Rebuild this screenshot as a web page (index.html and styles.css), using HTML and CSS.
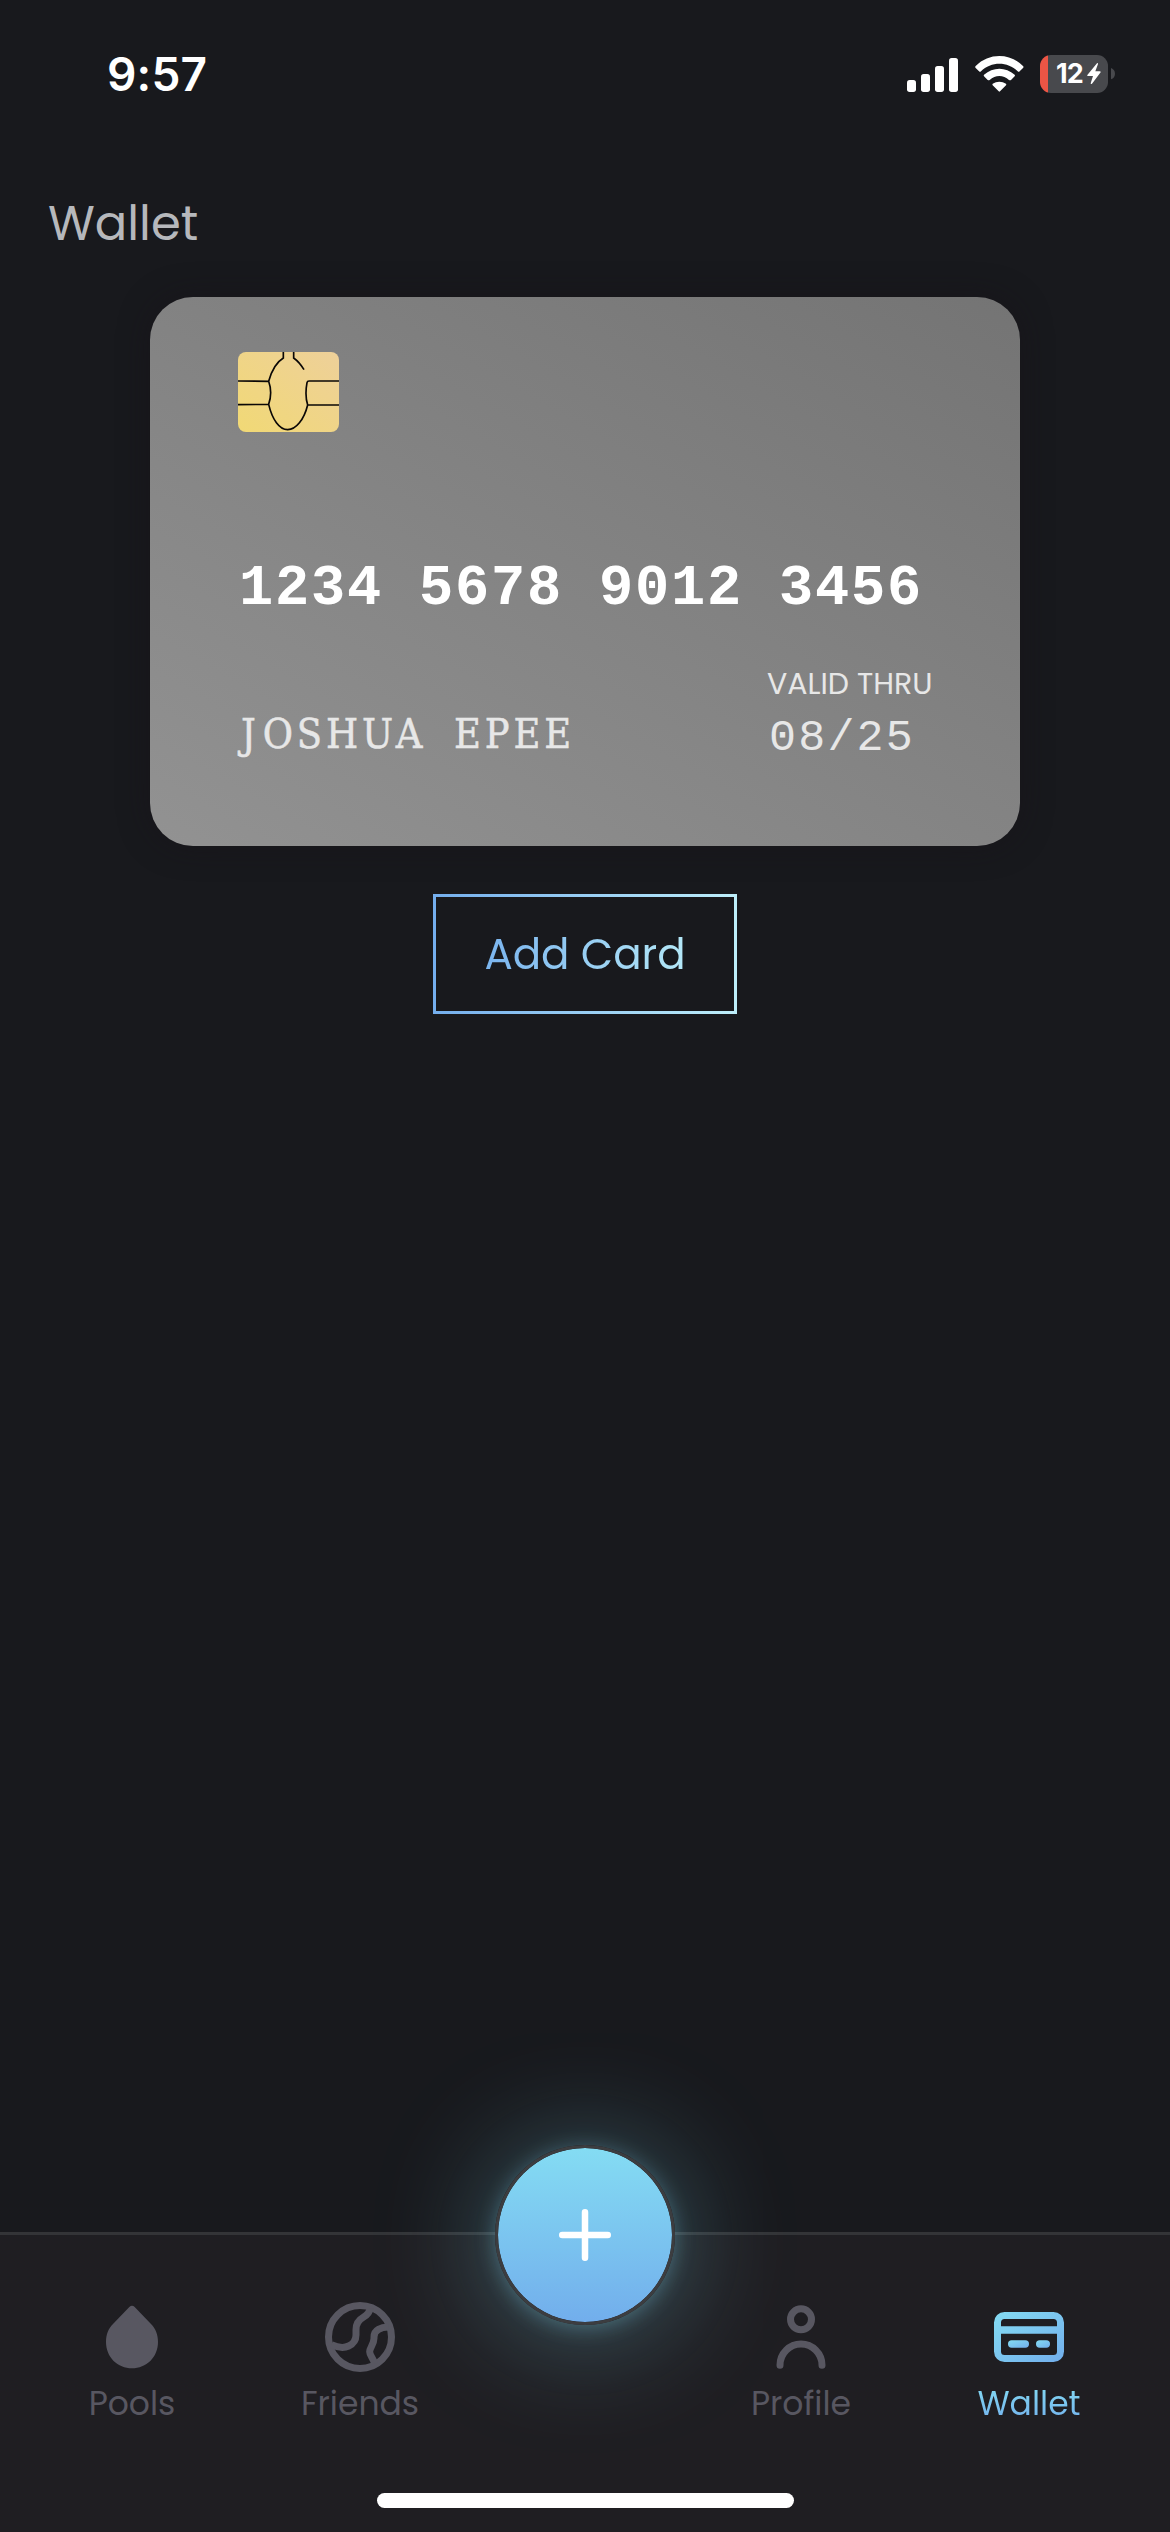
FILE: index.html
```html
<!DOCTYPE html>
<html lang="en">
<head>
<meta charset="utf-8">
<title>Wallet</title>
<link rel="stylesheet" href="styles.css">
</head>
<body>
<div class="screen">
  <header class="status">
    <span class="time">9:57</span>
    <div class="indicators">
      <svg class="signal" viewBox="0 0 153 108" fill="#fff">
        <rect x="0" y="72" width="27" height="36" rx="8"/>
        <rect x="42" y="54" width="27" height="54" rx="8"/>
        <rect x="84" y="30" width="27" height="78" rx="8"/>
        <rect x="126" y="6" width="27" height="102" rx="8"/>
      </svg>
      <svg class="wifi" viewBox="0 0 146 108" fill="#fff">
        <path d="M2 30C42-10 104-10 144 30Q147 33 144 36L134 46Q131 49 128 46C98 16 48 16 18 46Q15 49 12 46L2 36Q-1 33 2 30Z"/>
        <path d="M27 56C54 32 92 32 119 56Q121 59 119 61L108 72Q105 74 102 72C85 56 61 56 44 72Q41 74 38 72L27 61Q25 59 27 56Z"/>
        <path d="M53 83C65 75 81 75 93 83Q95 86 93 88L75 106Q73 108 71 106L53 88Q51 86 53 83Z"/>
      </svg>
      <div class="battery">
        <span class="level">12</span>
        <svg class="bolt" viewBox="0 0 42 64" fill="#fff"><path d="M30 1L1 36Q0 39 3 39H18L11 61Q11 65 15 62L41 28Q42 25 38 25H25L33 3Q33-1 30 1Z"/></svg>
      </div>
      <svg class="nub" viewBox="0 0 12 34"><path d="M0 0Q12 5 12 17T0 34Z" fill="#48494d"/></svg>
    </div>
  </header>

  <main class="content">
    <h1 class="title">Wallet</h1>
    <section class="card">
      <svg class="chip" viewBox="0 0 303 240">
        <defs><linearGradient id="gold" x1="0" y1="1" x2="1" y2="0"><stop offset="0" stop-color="#f1d975"/><stop offset="1" stop-color="#eed09a"/></linearGradient></defs>
        <rect width="303" height="240" rx="24" fill="url(#gold)"/>
        <path d="M136 0V18C116 30 101 55 92 88M0 87L92 88Q104 122 92 157L0 158M92 157C103 203 124 233 149 233S198 203 209 159H303M303 87H213Q208 87 207 92Q200 130 209 159M167 0V18Q184 30 198 53" fill="none" stroke="#0a0706" stroke-width="5"/>
      </svg>
      <div class="number">1234 5678 9012 3456</div>
      <div class="details">
        <div class="holder">JOSHUA EPEE</div>
        <div class="expiry">
          <div class="expiry-label">VALID THRU</div>
          <div class="expiry-date">08/25</div>
        </div>
      </div>
    </section>
    <button class="add"><span class="add-text">Add Card</span></button>
  </main>

  <nav class="tabs">
    <a class="tab">
      <svg class="icon" viewBox="0 0 252 252" fill="#585761"><path d="M118 36Q126 28 134 36L183 87C197 101 204 119 204 141C204 187 169 220 126 220C83 220 48 187 48 141C48 119 55 101 69 87Z"/></svg>
      <span class="label">Pools</span>
    </a>
    <a class="tab">
      <svg class="icon" viewBox="0 0 252 252" fill="none" stroke="#585761" stroke-width="21"><circle cx="126" cy="126" r="94.5"/><path d="M40 149C62 159 80 159 92 153C107 146 114 133 114 120V104C114 84 122 75 136 67C148 60 155 54 156 40M211 96C190 97 168 104 168 126V130C168 148 155 158 155 170C155 182 166 190 170 206"/></svg>
      <span class="label">Friends</span>
    </a>
    <span></span>
    <a class="tab">
      <svg class="icon" viewBox="0 0 252 252" fill="none" stroke="#585761" stroke-width="21" stroke-linecap="round"><circle cx="126" cy="73" r="31.5"/><path d="M63 211V210A63 63 0 0 1 189 210V211"/></svg>
      <span class="label">Profile</span>
    </a>
    <a class="tab">
      <svg class="icon" viewBox="0 0 252 252">
        <defs><linearGradient id="sky" x1="0" y1="0" x2="1" y2="1"><stop offset="0" stop-color="#84dcf3"/><stop offset="1" stop-color="#72aeec"/></linearGradient></defs>
        <path fill="url(#sky)" fill-rule="evenodd" d="M52.500 51H199.500A31.500 31.500 0 0 1 231 82.500V169.500A31.500 31.500 0 0 1 199.500 201H52.500A31.500 31.500 0 0 1 21 169.500V82.500A31.500 31.500 0 0 1 52.500 51ZM52.500 72A10.500 10.500 0 0 0 42 82.500V94H210V82.500A10.500 10.500 0 0 0 199.500 72ZM42 116V169.500A10.500 10.500 0 0 0 52.500 180H199.500A10.500 10.500 0 0 0 210 169.500V116Z"/>
        <rect x="63" y="136" width="63" height="22" rx="11" fill="url(#sky)"/>
        <rect x="147" y="136" width="42" height="22" rx="11" fill="url(#sky)"/>
      </svg>
      <span class="label wallet">Wallet</span>
    </a>
    <div class="fab"><svg class="plus" viewBox="0 0 52 52" fill="none" stroke="#fff" stroke-width="6.500" stroke-linecap="round"><path d="M26 3.250V48.750M3.250 26H48.750"/></svg></div>
    <div class="home"></div>
  </nav>
</div>
</body>
</html>
```

FILE: styles.css
```css
* { box-sizing: border-box; }

body {
  margin: 0;
  background: #18191d;
  font-family: Poppins, Inter, sans-serif;
  font-feature-settings: "cv11";
}

.screen {
  width: 1170px;
  height: 2532px;
  display: flex;
  flex-direction: column;
  overflow: hidden;
}

.status {
  height: 148px;
  padding: 0 55px 0 107px;
  display: flex;
  align-items: center;
  justify-content: space-between;
}

.time {
  font: 600 46px/62px Inter, sans-serif;
  color: #fff;
  letter-spacing: 0.2px;
}

.indicators { display: flex; align-items: center; }
.signal { width: 51px; height: 36px; margin-right: 17px; }
.wifi { width: 48.700px; height: 36px; margin-right: 16.500px; }

.battery {
  width: 68px;
  height: 38px;
  border-radius: 11px;
  background: linear-gradient(90deg, #ec5545 8px, #48494d 8px);
  display: flex;
  align-items: center;
  padding-left: 16px;
}

.level { width: 28px; font: 700 27px/38px Inter, sans-serif; color: #fff; letter-spacing: -0.8px; }
.bolt { width: 14px; height: 21.300px; margin-left: 3px; }
.nub { width: 4px; height: 11.300px; margin-left: 3px; }

.content {
  display: flex;
  flex-direction: column;
  align-items: center;
}

.title {
  align-self: stretch;
  margin: 41px 0 38px;
  padding-left: 48px;
  font-size: 48px;
  font-weight: 400;
  line-height: 70px;
  color: #b6b8bc;
}

.card {
  width: 870px;
  height: 549px;
  padding: 55px 88px 0;
  border-radius: 43px;
  background: linear-gradient(30deg, #929292, #747474);
  box-shadow: 0 0 30px rgba(23, 18, 24, 0.5);
}

.chip { display: block; width: 101px; height: 80px; }

.number {
  margin: 127px 0 0 1px;
  font: 700 57px/60px "Liberation Mono", monospace;
  letter-spacing: 1.800px;
  white-space: nowrap;
  color: #fff;
}

.details {
  margin-top: 44.500px;
  display: flex;
  justify-content: space-between;
  align-items: flex-end;
  color: #e7e7e7;
}

.holder {
  margin-bottom: 5px;
  padding-left: 3px;
  font: 41px/50px "DejaVu Serif Condensed", "DejaVu Serif", serif;
  font-stretch: condensed;
  letter-spacing: 3.900px;
  word-spacing: 12px;
  -webkit-text-stroke: 0.500px #e7e7e7;
}

.holder::first-letter { margin-right: 3px; }

.expiry { width: 165px; white-space: nowrap; }
.expiry-label { font-size: 30px; line-height: 40px; }
.expiry-date {
  margin: 10px 0 0 2px;
  font: 45px/50px "Liberation Mono", monospace;
  letter-spacing: 2.200px;
}

.add {
  margin-top: 48px;
  width: 304px;
  height: 120px;
  padding: 2px 0 0;
  border: 3px solid transparent;
  background:
    linear-gradient(#18191d, #18191d) padding-box,
    linear-gradient(90deg, #74aeed, #bdeefa) border-box;
  font: inherit;
}

.add-text {
  font-size: 42px;
  line-height: 60px;
  background: linear-gradient(90deg, #7ab4ee, #b4e8f8);
  background-clip: text;
  color: transparent;
}

.tabs {
  position: relative;
  margin-top: auto;
  height: 300px;
  border-top: 3px solid #333437;
  background: #1f1e22;
  padding: 60px 27px 0 18px;
  display: grid;
  grid-template-columns: 228px 228px 213px 228px 228px;
}

.tab { display: flex; flex-direction: column; align-items: center; }
.icon { width: 84px; height: 84px; }
.label { margin-top: 5px; font-size: 33px; line-height: 40px; color: #585761; }

.wallet {
  background: linear-gradient(#84dcf3, #72aeec);
  background-clip: text;
  color: transparent;
}

.fab {
  position: absolute;
  left: 495px;
  top: -90px;
  width: 180px;
  height: 180px;
  border: 3px solid #3c3d40;
  border-radius: 50%;
  background: linear-gradient(#84dcf3, #72aeec) padding-box;
  box-shadow: 0 3px 20px rgba(132, 220, 243, 0.3), 0 6px 120px rgba(132, 220, 243, 0.4);
  display: flex;
  align-items: center;
  justify-content: center;
}

.plus { width: 52px; height: 52px; }

.home {
  position: absolute;
  left: 377px;
  bottom: 24px;
  width: 417px;
  height: 15px;
  border-radius: 8px;
  background: #fff;
}
```
